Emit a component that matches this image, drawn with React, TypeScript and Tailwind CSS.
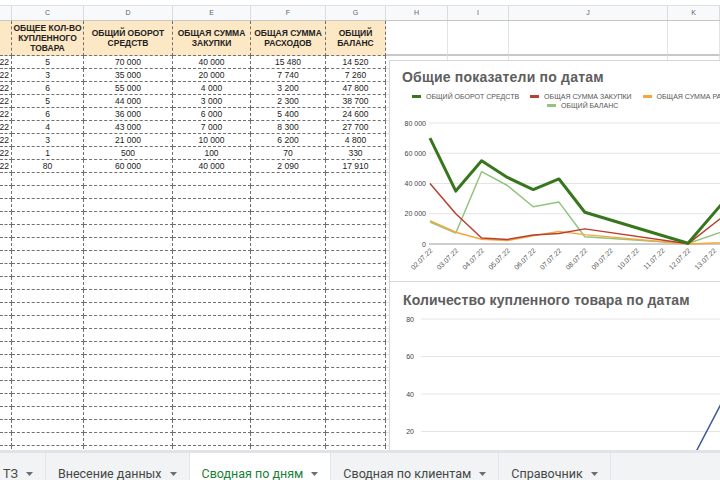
import React from "react";

// widths of columns B..K as they sit in the viewport
const colW = [
  "w-[12px]",
  "w-[72px]",
  "w-[89px]",
  "w-[78px]",
  "w-[75px]",
  "w-[60px]",
  "w-[62px]",
  "w-[61px]",
  "w-[159px]",
  "w-[52px]",
];
const letters = ["B", "C", "D", "E", "F", "G", "H", "I", "J", "K"];

const headers = [
  "",
  "ОБЩЕЕ КОЛ-ВО КУПЛЕННОГО ТОВАРА",
  "ОБЩИЙ ОБОРОТ СРЕДСТВ",
  "ОБЩАЯ СУММА ЗАКУПКИ",
  "ОБЩАЯ СУММА РАСХОДОВ",
  "ОБЩИЙ БАЛАНС",
];

const rows = [
  ["02.07.22", "5", "70 000", "40 000", "15 480", "14 520"],
  ["03.07.22", "3", "35 000", "20 000", "7 740", "7 260"],
  ["04.07.22", "6", "55 000", "4 000", "3 200", "47 800"],
  ["05.07.22", "5", "44 000", "3 000", "2 300", "38 700"],
  ["06.07.22", "6", "36 000", "6 000", "5 400", "24 600"],
  ["07.07.22", "4", "43 000", "7 000", "8 300", "27 700"],
  ["08.07.22", "3", "21 000", "10 000", "6 200", "4 800"],
  ["12.07.22", "1", "500", "100", "70", "330"],
  ["15.07.22", "80", "60 000", "40 000", "2 090", "17 910"],
];

const dashed = "border-r border-b border-dashed border-[#707070]";
const plain = "border-r border-b border-[#e2e3e3]";

// chart geometry (local to each chart box)
const X0 = 40;
const DX = 25.8;
const days = [0, 1, 2, 3, 4, 5, 6, 10, 13];
const sy1 = (v: number) => 183 - (v * 121) / 80000;
const sy2 = (v: number) => 187 - v * 1.875;
const line = (vals: number[], sy: (v: number) => number) =>
  vals.map((v, i) => `${X0 + DX * days[i]},${sy(v)}`).join(" ");

const turnover = [70000, 35000, 55000, 44000, 36000, 43000, 21000, 500, 60000];
const purchase = [40000, 20000, 4000, 3000, 6000, 7000, 10000, 100, 40000];
const expenses = [15480, 7740, 3200, 2300, 5400, 8300, 6200, 70, 2090];
const balance = [14520, 7260, 47800, 38700, 24600, 27700, 4800, 330, 17910];
const qty = [5, 3, 6, 5, 6, 4, 3, 1, 80];

const dateLabels = Array.from({ length: 12 }, (_, i) => `${String(i + 2).padStart(2, "0")}.07.22`);

const Caret = () => (
  <svg width="7" height="4" viewBox="0 0 7 4">
    <polygon points="0,0 7,0 3.5,4" fill="#6b6e72" />
  </svg>
);

const LegendItem = ({ color, label }: { color: string; label: string }) => (
  <div className="flex shrink-0 items-center gap-[5px] whitespace-nowrap">
    <div className={`w-[9px] h-[2.5px] ${color}`} />
    <span>{label}</span>
  </div>
);

const OverviewChart = () => (
  <div className="absolute left-[389px] top-[39px] w-[340px] h-[221px] bg-white border-l border-t border-[#d6d6d6]">
    <div className="pl-[12px] pt-[8px] text-[14px] leading-[16px] font-bold text-[#5e5e5e] tracking-[0.2px]">
      Общие показатели по датам
    </div>
    <div className="mt-[7px] text-[7px] leading-[9px] text-[#555]">
      <div className="flex pl-[22px] gap-[11px]">
        <LegendItem color="bg-[#38761d]" label="ОБЩИЙ ОБОРОТ СРЕДСТВ" />
        <LegendItem color="bg-[#b8402e]" label="ОБЩАЯ СУММА ЗАКУПКИ" />
        <LegendItem color="bg-[#f4a740]" label="ОБЩАЯ СУММА РАСХОДОВ" />
      </div>
      <div className="flex pl-[157px]">
        <LegendItem color="bg-[#93c47d]" label="ОБЩИЙ БАЛАНС" />
      </div>
    </div>
    <svg className="absolute left-0 top-0" width="340" height="221">
      {[0, 20000, 40000, 60000, 80000].map((v) => (
        <g key={v}>
          <line x1="39" x2="340" y1={sy1(v)} y2={sy1(v)} stroke={v === 0 ? "#9a9a9a" : "#e4e4e4"} strokeWidth="1" />
          <text x="36" y={sy1(v) + 2.5} textAnchor="end" fontSize="7" fill="#444" fontFamily="Liberation Sans, sans-serif">
            {v === 0 ? "0" : `${v / 1000} 000`}
          </text>
        </g>
      ))}
      {dateLabels.map((d, i) => (
        <text
          key={d}
          transform={`translate(${X0 + DX * i + 3},190) rotate(-45)`}
          textAnchor="end"
          fontSize="7"
          fill="#555"
          fontFamily="Liberation Sans, sans-serif"
        >
          {d}
        </text>
      ))}
      <polyline points={line(balance, sy1)} fill="none" stroke="#93c47d" strokeWidth="1.5" strokeLinejoin="round" />
      <polyline points={line(expenses, sy1)} fill="none" stroke="#f4a740" strokeWidth="1.5" strokeLinejoin="round" />
      <polyline points={line(purchase, sy1)} fill="none" stroke="#b8402e" strokeWidth="1.5" strokeLinejoin="round" />
      <polyline points={line(turnover, sy1)} fill="none" stroke="#38761d" strokeWidth="3" strokeLinejoin="round" />
    </svg>
  </div>
);

const QtyChart = () => (
  <div className="absolute left-[389px] top-[260px] w-[340px] h-[200px] bg-white border-l border-t border-[#d6d6d6]">
    <div className="pl-[13px] pt-[10px] text-[14px] leading-[16px] font-bold text-[#5e5e5e] tracking-[0.1px]">
      Количество купленного товара по датам
    </div>
    <svg className="absolute left-0 top-0" width="340" height="200">
      {[20, 40, 60, 80].map((v) => (
        <g key={v}>
          <line x1="31" x2="340" y1={sy2(v)} y2={sy2(v)} stroke="#e4e4e4" strokeWidth="1" />
          <text x="24" y={sy2(v) + 2.5} textAnchor="end" fontSize="7" fill="#444" fontFamily="Liberation Sans, sans-serif">
            {v}
          </text>
        </g>
      ))}
      <polyline points={line(qty, sy2)} fill="none" stroke="#3d5a98" strokeWidth="1.5" strokeLinejoin="round" />
    </svg>
  </div>
);

const tabs = ["ТЗ", "Внесение данных", "Сводная по дням", "Сводная по клиентам", "Справочник"];

export default function App() {
  const emptyRows = Array.from({ length: 22 });

  return (
    <div className="w-[720px] h-[480px] flex flex-col overflow-hidden bg-white font-['Liberation_Sans',Arial,sans-serif]">
      {/* strip under the formula bar */}
      <div className="h-[6px] border-b border-[#e0e0e0]" />

      {/* column letters */}
      <div className="flex h-[15px] bg-[#f8f9fa] border-b border-[#c4c7c5]">
        {letters.map((l, i) => (
          <div
            key={l}
            className={`${colW[i]} shrink-0 border-r border-[#dadce0] flex items-center justify-center text-[7px] text-[#5f6368]`}
          >
            {i === 0 ? "" : l}
          </div>
        ))}
      </div>

      {/* sheet body */}
      <div className="relative flex-1 overflow-hidden">
        {/* yellow header row */}
        <div className="flex h-[35px]">
          {headers.map((h, i) => (
            <div
              key={i}
              className={`${colW[i]} shrink-0 ${dashed} bg-[#fce8c5] flex items-center justify-center text-center px-[1px] text-[8.5px] leading-[10px] font-bold text-[#222]`}
            >
              {h}
            </div>
          ))}
          {[6, 7, 8, 9].map((i) => (
            <div key={i} className={`${colW[i]} shrink-0 border-r border-[#e2e3e3] border-b-2 border-b-[#c8c8c8]`} />
          ))}
        </div>

        {/* data rows */}
        {rows.map((r, ri) => (
          <div key={ri} className="flex h-[13px]">
            {r.map((c, i) => (
              <div
                key={i}
                className={`${colW[i]} shrink-0 ${dashed} flex items-center overflow-hidden whitespace-nowrap text-[8.5px] text-[#222] ${
                  i === 0 ? "justify-end pr-[2px]" : "justify-center"
                }`}
              >
                {c}
              </div>
            ))}
            {[6, 7, 8, 9].map((i) => (
              <div key={i} className={`${colW[i]} shrink-0 ${plain}`} />
            ))}
          </div>
        ))}

        {/* empty formatted rows */}
        {emptyRows.map((_, ri) => (
          <div key={ri} className="flex h-[13px]">
            {[0, 1, 2, 3, 4, 5].map((i) => (
              <div key={i} className={`${colW[i]} shrink-0 ${dashed}`} />
            ))}
            {[6, 7, 8, 9].map((i) => (
              <div key={i} className={`${colW[i]} shrink-0 ${plain}`} />
            ))}
          </div>
        ))}

        <OverviewChart />
        <QtyChart />
      </div>

      {/* sheet tabs */}
      <div className="h-[30px] bg-[#f1f3f4] border-t-[3px] border-[#e1e3e6] font-['Roboto',sans-serif]">
        <div className="flex h-full -ml-[9px]">
          {tabs.map((t) => {
            const active = t === "Сводная по дням";
            return (
              <div
                key={t}
                className={`flex items-start pt-[13px] gap-[8px] px-[12px] text-[12.5px] leading-[16px] border-r border-[#e3e5e8] ${
                  active ? "bg-white text-[#188038]" : "text-[#444746]"
                }`}
              >
                <span>{t}</span>
                <span className="pt-[6px]">
                  <Caret />
                </span>
              </div>
            );
          })}
        </div>
      </div>
    </div>
  );
}
